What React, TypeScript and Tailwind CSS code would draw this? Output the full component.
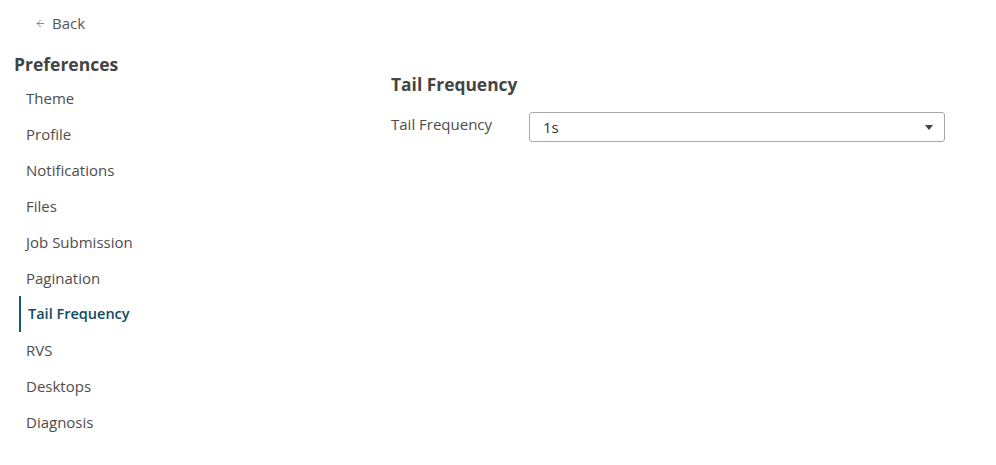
import { ArrowLeft } from 'lucide-react'

const items = ['Theme', 'Profile', 'Notifications', 'Files', 'Job Submission', 'Pagination', 'Tail Frequency', 'RVS', 'Desktops', 'Diagnosis']

export default function App() {
  return (
    <div className="w-[996px] h-[465px] bg-white text-[#4a4a4a] flex" style={{ fontFamily: '"Open Sans", "Noto Sans", sans-serif' }}>
      <aside className="w-[391px] shrink-0">
        <a className="flex items-center gap-[6px] pl-[35px] pt-[12px] h-[34px] text-[15px] text-[#555]">
          <ArrowLeft className="w-[11px] h-[11px]" strokeWidth={1.5} />
          Back
        </a>
        <h2 className="pl-[14px] mt-[18px] text-[17.5px] font-bold text-[#444] leading-[24px]">Preferences</h2>
        <ul className="mt-[4px] pl-[19px]">
          {items.map((item) => {
            const active = item === 'Tail Frequency'
            return (
              <li
                key={item}
                className={
                  active
                    ? 'h-[36px] flex items-center pl-[7px] border-l-2 border-[#0f5a78] text-[14.5px] font-semibold text-[#0e4a66]'
                    : 'h-[36px] flex items-center pl-[7px] text-[15px] text-[#4d4d4d]'
                }
              >
                {item}
              </li>
            )
          })}
        </ul>
      </aside>
      <main className="flex-1 pt-[72px]">
        <h3 className="text-[17.4px] font-bold text-[#444] leading-[24px]">Tail Frequency</h3>
        <div className="mt-[17px] flex items-start">
          <label className="w-[138px] text-[15px] text-[#4d4d4d] leading-[22px]">Tail Frequency</label>
          <div className="w-[416px] h-[30px] border border-[#a8a8a8] rounded-[3px] flex items-center justify-between pl-[13px] pr-[11px] mt-[-1px]">
            <span className="text-[15px] text-[#333]">1s</span>
            <svg width="8" height="5" viewBox="0 0 8 5">
              <path d="M0 0 L8 0 L4 5 Z" fill="#444" />
            </svg>
          </div>
        </div>
      </main>
    </div>
  )
}
